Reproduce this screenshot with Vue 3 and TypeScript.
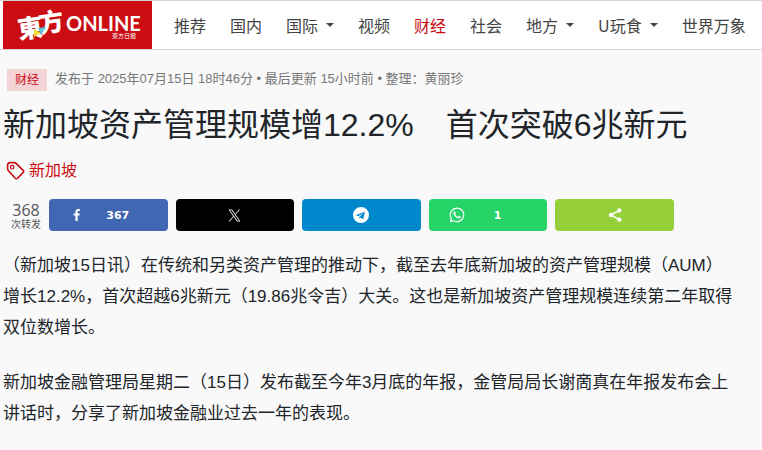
<script setup lang="ts">
interface NavItem {
  label: string
  menu?: boolean
  active?: boolean
}

interface Share {
  name: string
  count?: number
}

const nav: NavItem[] = [
  { label: '推荐' },
  { label: '国内' },
  { label: '国际', menu: true },
  { label: '视频' },
  { label: '财经', active: true },
  { label: '社会' },
  { label: '地方', menu: true },
  { label: 'U玩食', menu: true },
  { label: '世界万象' },
]

const shares: Share[] = [
  { name: 'facebook', count: 367 },
  { name: 'x' },
  { name: 'telegram' },
  { name: 'whatsapp', count: 1 },
  { name: 'sharethis' },
]

const paragraphs: string[] = [
  '（新加坡15日讯）在传统和另类资产管理的推动下，截至去年底新加坡的资产管理规模（AUM）增长12.2%，首次超越6兆新元（19.86兆令吉）大关。这也是新加坡资产管理规模连续第二年取得双位数增长。',
  '新加坡金融管理局星期二（15日）发布截至今年3月底的年报，金管局局长谢啇真在年报发布会上讲话时，分享了新加坡金融业过去一年的表现。',
]
</script>

<template>
  <div class="page" lang="zh-CN">
    <header class="site-header">
      <a class="logo" href="#">
        <svg width="149" height="48" viewBox="0 0 149 48">
          <g fill="#fff">
            <text class="brand-cjk" transform="translate(16 38) rotate(-8)" font-size="25">東</text>
            <text class="brand-cjk" transform="translate(37 32) rotate(-8)" font-size="25">方</text>
            <text class="brand-latin" x="63" y="30" font-size="20">ONLINE</text>
            <text class="brand-sub" x="109" y="37" font-size="6">東方日报</text>
          </g>
          <path d="M31 28l7 4-7 4z" fill="#f5dc3c" />
          <path d="M35 27l8-1-5 8z" fill="#62c4dc" />
        </svg>
      </a>
      <nav class="nav">
        <a
          v-for="item in nav"
          :key="item.label"
          href="#"
          class="nav-link"
          :class="{ active: item.active }"
        >{{ item.label }}<span v-if="item.menu" class="caret"></span></a>
      </nav>
    </header>

    <article class="article">
      <div class="meta">
        <a class="category" href="#">财经</a>
        <span class="byline">发布于 2025年07月15日 18时46分 • 最后更新 15小时前 • 整理：黄丽珍</span>
      </div>
      <h1>新加坡资产管理规模增12.2%　首次突破6兆新元</h1>
      <a class="tag" href="#">
        <svg width="20" height="20" viewBox="0 0 20 20" fill="none" stroke="currentColor">
          <path d="M1.6 7.2V4.4Q1.6 1.6 4.4 1.6H8q1.3 0 2.1.8l7 7q1.2 1.1 0 2.2l-5.6 5.6q-1.1 1.1-2.2 0l-6.9-7.4q-.8-.9-.8-2.6z" stroke-width="1.6" />
          <circle cx="6.2" cy="6.2" r="1.8" stroke-width="1.2" />
        </svg>
        新加坡
      </a>

      <div class="share">
        <div class="total">
          <strong>368</strong>
          <span>次转发</span>
        </div>
        <button
          v-for="s in shares"
          :key="s.name"
          type="button"
          class="share-btn"
          :class="s.name"
          :aria-label="s.name"
        >
          <svg v-if="s.name === 'facebook'" width="16" height="16" viewBox="0 0 40 40" fill="#fff">
            <path d="M21.7 35V21.3h4.6l.7-5.3h-5.3v-3.4c0-1.5.4-2.6 2.6-2.6h2.8V5.2C26.6 5.1 25 5 23 5c-4.1 0-6.9 2.5-6.9 7v4h-4.6v5.3h4.6V35h5.6z" />
          </svg>
          <svg v-else-if="s.name === 'x'" width="13" height="13" viewBox="0 0 24 24" fill="#fff">
            <path d="M14.1 10.3 22.3 1h-2l-7.1 8.1L7.6 1H1l8.6 12.2L1 23h2l7.5-8.6 6 8.6H23zm-2.6 3-.9-1.2L3.6 2.4h3l5.6 7.9.9 1.2 7.3 10.2h-3z" />
          </svg>
          <svg v-else-if="s.name === 'telegram'" width="16" height="16" viewBox="0 0 24 24" fill="#fff">
            <path d="M12 0a12 12 0 1 0 0 24 12 12 0 0 0 0-24zm5.6 8.2-2 9.4c-.1.7-.5.8-1.1.5l-3-2.2-1.5 1.4c-.2.2-.3.3-.6.3l.2-3.1 5.6-5c.2-.2 0-.3-.4-.1l-6.9 4.3-3-.9c-.6-.2-.6-.6.2-.9l11.6-4.5c.5-.2 1 .1.9.8z" />
          </svg>
          <svg v-else-if="s.name === 'whatsapp'" width="16" height="16" viewBox="-1 -1 26 26" fill="#fff">
            <path d="M17.5 14.4c-.3-.2-1.8-.9-2-1-.3-.1-.5-.1-.7.2l-.9 1.1c-.2.2-.4.2-.7.1-.3-.2-1.2-.5-2.4-1.5-.9-.8-1.5-1.8-1.6-2.1-.2-.3 0-.4.1-.6l.5-.5.3-.5c.1-.2.1-.4 0-.5l-.9-2.2c-.2-.6-.5-.5-.7-.5h-.6c-.2 0-.5.1-.8.4-.3.3-1 1-1 2.5s1.1 2.9 1.2 3.1c.1.2 2.1 3.2 5.1 4.5 1.8.8 2.5.8 3.4.7.5-.1 1.7-.7 2-1.4.2-.7.2-1.2.2-1.4-.1-.1-.3-.2-.5-.4zM12 0C5.5 0 .2 5.3.2 11.9c0 2.1.5 4.1 1.6 5.9L0 24l6.3-1.7c1.7 1 3.7 1.5 5.7 1.5 6.6 0 11.9-5.3 11.9-11.9S18.6 0 12 0zm0 21.8c-1.8 0-3.5-.5-5-1.4l-.4-.2-3.7 1 1-3.6-.2-.4A9.9 9.9 0 1 1 12 21.8z" />
          </svg>
          <svg v-else width="16" height="16" viewBox="0 0 16 16" fill="#fff">
            <path d="M12.3 3.4L4 8l8.3 4.6" fill="none" stroke="#fff" stroke-width="1.5" />
            <circle cx="12.3" cy="3.4" r="2.2" />
            <circle cx="4" cy="8" r="2.2" />
            <circle cx="12.3" cy="12.6" r="2.2" />
          </svg>
          <span v-if="s.count" class="count">{{ s.count }}</span>
        </button>
      </div>

      <p v-for="text in paragraphs" :key="text">{{ text }}</p>
    </article>
  </div>
</template>

<style>
body {
  margin: 0;
  background: #f9f9f9;
}
</style>

<style scoped>
.page {
  font-family: "Liberation Sans", "Noto Sans CJK SC", sans-serif;
  color: #212529;
}

a {
  color: inherit;
  text-decoration: none;
}

.site-header {
  display: flex;
  align-items: stretch;
  padding-left: 3px;
  background: #fff;
  border-top: 1px solid #d6d6d6;
  border-bottom: 1px solid #d6d6d6;
}

.logo {
  flex: none;
  background: #cb0c13;
}

.logo svg {
  display: block;
  overflow: visible;
}

.brand-cjk,
.brand-sub {
  font-family: "Noto Sans CJK TC", sans-serif;
  font-weight: 900;
}

.brand-sub {
  font-weight: 400;
}

.brand-latin {
  font-family: Lato, sans-serif;
  font-weight: 700;
}

.nav {
  display: flex;
  align-items: center;
  gap: 24px;
  padding-left: 22px;
  font-family: "Noto Sans CJK SC", sans-serif;
  font-size: 16px;
  line-height: 24px;
  color: #444;
  white-space: nowrap;
}

.nav-link {
  display: flex;
  align-items: center;
}

.nav-link.active {
  color: #cb0c13;
}

.caret {
  margin-left: 8px;
  border: 4px solid transparent;
  border-top-color: currentColor;
  border-bottom: 0;
}

.article {
  padding: 19px 26px 0 3px;
}

.meta {
  display: flex;
  align-items: flex-start;
  gap: 8px;
  padding-left: 4px;
  font-size: 13px;
  line-height: 20px;
  color: #777;
}

.category {
  padding: 0 8px;
  background: #f4d3d6;
  color: #cb0c13;
  font-size: 12px;
  line-height: 22px;
}

h1 {
  margin: 14px 0 0;
  font-size: 32px;
  line-height: 40px;
  font-weight: 400;
}

.tag {
  display: flex;
  align-items: center;
  gap: 3px;
  margin-top: 14px;
  padding-left: 3px;
  font-size: 16px;
  line-height: 24px;
  color: #cb0c13;
}

.share {
  display: flex;
  gap: 8px;
  margin: 16px 62px 0 8px;
}

.total {
  display: flex;
  flex-direction: column;
  justify-content: flex-end;
  flex: none;
  width: 30px;
  text-align: center;
  color: #555;
  font-size: 10px;
  line-height: 12px;
}

.total strong {
  font-family: "Open Sans", sans-serif;
  font-weight: 400;
  font-size: 16px;
  line-height: 18px;
}

.share-btn {
  display: flex;
  align-items: center;
  justify-content: center;
  gap: 3px;
  flex: 1;
  height: 32px;
  padding: 0;
  border: 0;
  border-radius: 4px;
  color: #fff;
}

.count {
  width: 60px;
  text-align: center;
  font-family: "DejaVu Sans", sans-serif;
  font-size: 11px;
  font-weight: 700;
}

.facebook {
  background: #4267b2;
}

.x {
  background: #000;
}

.telegram {
  background: #0088cc;
}

.whatsapp {
  background: #25d366;
}

.sharethis {
  background: #95d03a;
}

p {
  margin: 0 0 24px;
  font-size: 17px;
  line-height: 31px;
}

.share + p {
  margin-top: 19px;
}
</style>
